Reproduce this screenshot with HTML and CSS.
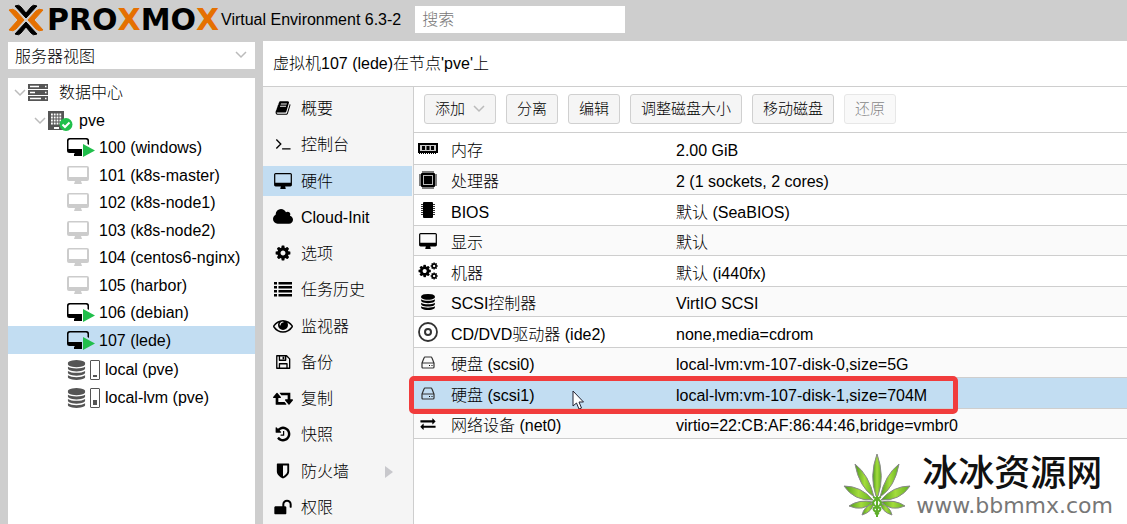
FILE: index.html
```html
<!DOCTYPE html>
<html lang="zh-CN">
<head>
  <meta charset="utf-8">
  <title>pve - Proxmox Virtual Environment</title>
  <link rel="stylesheet" href="styles.css">
</head>
<body>
  <!--icons-->
  <svg class="sprite" aria-hidden="true">
    <symbol id="desktop" viewBox="0 0 1856 1664"><path d="M1728 992v-832q0-13-9.500-22.500t-22.500-9.500h-1536q-13 0-22.500 9.500t-9.500 22.500v832q0 13 9.500 22.500t22.500 9.500h1536q13 0 22.500-9.500t9.500-22.500zm128-832v1088q0 66-47 113t-113 47h-544q0 37 16 77.500t32 71 16 43.500q0 26-19 45t-45 19h-448q-26 0-45-19t-19-45q0-14 16-44t32-70 16-78h-544q-66 0-113-47t-47-113v-1088q0-66 47-113t113-47h1536q66 0 113 47t47 113z"/></symbol>
    <symbol id="book" viewBox="0 0 1792 1792"><path d="M1703 478q40 57 18 129l-275 906q-19 64-76.500 107.500t-122.500 43.500h-923q-77 0-148.500-53.500t-99.500-131.500q-24-67-2-127 0-4 3-27t4-37q1-8-3-21.500t-3-19.500q2-11 8-21t16.500-23.500 16.500-23.500q23-38 45-91.500t30-91.500q3-10 .5-30t-.5-28q3-11 17-28t17-23q21-36 42-92t25-90q1-9-2.500-32t.5-28q4-13 22-30.500t22-22.500q19-26 42.500-84.500t27.500-96.500q1-8-3-25.500t-2-26.500q2-8 9-18t18-23 17-21q8-12 16.500-30.500t15-35 16-36 19.500-32 26.500-23.500 36-11.500 47.500 5.500l-1 3q38-9 51-9h761q74 0 114 56t18 130l-274 906q-36 119-71.500 153.500t-128.500 34.500h-869q-27 0-38 15-11 16-1 43 24 70 144 70h923q29 0 56-15.500t35-41.500l300-987q7-22 5-57 38 15 59 43zm-1064 2q-4 13 2 22.500t20 9.500h608q13 0 25.500-9.500t16.500-22.500l21-64q4-13-2-22.500t-20-9.500h-608q-13 0-25.500 9.500t-16.500 22.500zm-83 256q-4 13 2 22.500t20 9.500h608q13 0 25.500-9.500t16.500-22.500l21-64q4-13-2-22.500t-20-9.500h-608q-13 0-25.500 9.500t-16.500 22.500z"/></symbol>
    <symbol id="terminal" viewBox="0 0 18 18"><path d="M1.500 4l5 5-5 5M8 14.500h9.500" fill="none" stroke="currentColor" stroke-width="1.500"/></symbol>
    <symbol id="cloud" viewBox="64 192 1920 1408"><path d="M1984 1152q0 159-112.500 271.500t-271.500 112.500h-1088q-185 0-316.500-131.500t-131.500-316.500q0-132 71-241.500t187-163.500q-2-28-2-43 0-212 150-362t362-150q158 0 286.500 88t187.500 230q70-62 166-62 106 0 181 75t75 181q0 75-41 138 129 30 213 134.500t84 239.500z"/></symbol>
    <symbol id="cog" viewBox="64 64 1664 1664"><path d="M1152 896q0-106-75-181t-181-75-181 75-75 181 75 181 181 75 181-75 75-181zm512-109v222q0 12-8 23t-20 13l-185 28q-19 54-39 91 35 50 107 138 10 12 10 25t-9 23q-27 37-99 108t-94 71q-12 0-26-9l-138-108q-44 23-91 38-16 136-29 186-7 28-36 28h-222q-14 0-24.500-8.500t-11.500-21.500l-28-184q-49-16-90-37l-141 107q-10 9-25 9-14 0-25-11-126-114-165-168-7-10-7-23 0-12 8-23 15-21 51-66.500t54-70.500q-27-50-41-99l-183-27q-13-2-21-12.500t-8-23.500v-222q0-12 8-23t19-13l186-28q14-46 39-92-40-57-107-138-10-12-10-24 0-10 9-23 26-36 98.500-107.500t94.500-71.500q13 0 26 10l138 107q44-23 91-38 16-136 29-186 7-28 36-28h222q14 0 24.500 8.500t11.500 21.500l28 184q49 16 90 37l142-107q9-9 24-9 13 0 25 10 129 119 165 170 7 8 7 22 0 12-8 23-15 21-51 66.500t-54 70.500q26 50 41 98l183 28q13 2 21 12.500t8 23.500z"/></symbol>
    <symbol id="cogs" viewBox="0 0 18 18"><use href="#cog" x="0" y="3" width="12" height="12"/><use href="#cog" x="11" y="1" width="7" height="7"/><use href="#cog" x="11" y="10" width="7" height="7"/></symbol>
    <symbol id="list" viewBox="0 0 18 16"><path d="M0 1h3v2.500H0zM4.500 1H18v2.500H4.500zM0 5h3v2.500H0zM4.500 5H18v2.500H4.500zM0 9h3v2.500H0zM4.500 9H18v2.500H4.500zM0 13h3v2.500H0zM4.500 13H18v2.500H4.500z"/></symbol>
    <symbol id="eye" viewBox="0 256 1792 1344"><path d="M1664 960q-152-236-381-353 61 104 61 225 0 185-131.500 316.500t-316.500 131.500-316.500-131.500-131.500-316.500q0-121 61-225-229 117-381 353 133 205 333.500 326.500t434.500 121.500 434.500-121.500 333.500-326.500zm-720-384q0-20-14-34t-34-14q-125 0-214.500 89.500t-89.500 214.500q0 20 14 34t34 14 34-14 14-34q0-86 61-147t147-61q20 0 34-14t14-34zm848 384q0 34-20 69-140 230-376.500 368.500t-499.500 138.500-499.500-139-376.500-368q-20-35-20-69t20-69q140-229 376.500-368t499.500-139 499.500 139 376.500 368q20 35 20 69z"/></symbol>
    <symbol id="save" viewBox="0 0 18 18"><path d="M2 2h11l3.500 3.500V16H2zM5 2v5h7V2M5 16v-5h8.500v5" fill="none" stroke="currentColor" stroke-width="1.500" stroke-linejoin="round"/><path d="M8.500 3h2v3h-2z"/></symbol>
    <symbol id="retweet" viewBox="0 128 1920 1536"><path d="M1280 1504q0 13-9.500 22.500t-22.500 9.500h-960q-8 0-13.500-2t-9-7-5.500-8-3-11.500-1-11.500v-600h-192q-26 0-45-19t-19-45q0-24 15-41l320-384q19-22 49-22t49 22l320 384q15 17 15 41 0 26-19 45t-45 19h-192v384h576q16 0 25 11l160 192q7 10 7 21zm640-416q0 24-15 41l-320 384q-20 23-49 23t-49-23l-320-384q-15-17-15-41 0-26 19-45t45-19h192v-384h-576q-16 0-25-12l-160-192q-7-9-7-20 0-13 9.500-22.500t22.500-9.500h960q8 0 13.500 2t9 7 5.500 8 3 11.500 1 11.500v600h192q26 0 45 19t19 45z"/></symbol>
    <symbol id="history" viewBox="64 64 1664 1664"><path d="M1664 896q0 156-61 298t-164 245-245 164-298 61q-172 0-327-72.500t-264-204.500q-7-10-6.500-22.500t8.500-20.500l137-138q10-9 25-9 16 2 23 12 73 95 179 147t225 52q104 0 198.500-40.500t163.500-109.500 109.500-163.500 40.500-198.500-40.500-198.500-109.500-163.500-163.500-109.500-198.500-40.500q-98 0-188 35.500t-160 101.500l137 138q31 30 14 69-17 40-59 40h-448q-26 0-45-19t-19-45v-448q0-42 40-59 39-17 69 14l130 129q107-101 244.500-156.500t284.500-55.500q156 0 298 61t245 164 164 245 61 298zm-640-288v448q0 14-9 23t-23 9h-320q-14 0-23-9t-9-23v-64q0-14 9-23t23-9h224v-352q0-14 9-23t23-9h64q14 0 23 9t9 23z"/></symbol>
    <symbol id="shield" viewBox="64 64 1664 1664"><path d="M1344 960v-640h-448v1137q119-63 213-137 235-184 235-360zm192-768v768q0 86-33.500 170.500t-83 150-118 127.500-126.500 103-121 77.500-89.500 49.500-42.500 20q-12 6-26 6t-26-6q-16-7-42.500-20t-89.500-49.500-121-77.500-126.500-103-118-127.500-83-150-33.500-170.500v-768q0-26 19-45t45-19h1152q26 0 45 19t19 45z"/></symbol>
    <symbol id="unlock" viewBox="0 64 1792 1536"><path d="M1728 576v256q0 26-19 45t-45 19h-64q-26 0-45-19t-19-45v-256q0-106-75-181t-181-75-181 75-75 181v192h96q40 0 68 28t28 68v576q0 40-28 68t-68 28h-960q-40 0-68-28t-28-68v-576q0-40 28-68t68-28h672v-192q0-185 131.500-316.500t316.500-131.500 316.500 131.500 131.500 316.500z"/></symbol>
    <symbol id="database" viewBox="128 0 1536 1792"><path d="M896 768q237 0 443-43t325-127v170q0 69-103 128t-280 93.500-385 34.500-385-34.500-280-93.500-103-128v-170q119 84 325 127t443 43zm0 768q237 0 443-43t325-127v170q0 69-103 128t-280 93.500-385 34.500-385-34.500-280-93.500-103-128v-170q119 84 325 127t443 43zm0-384q237 0 443-43t325-127v170q0 69-103 128t-280 93.500-385 34.500-385-34.500-280-93.500-103-128v-170q119 84 325 127t443 43zm0-1152q208 0 385 34.500t280 93.500 103 128v128q0 69-103 128t-280 93.500-385 34.500-385-34.500-280-93.500-103-128v-128q0-69 103-128t280-93.500 385-34.500z"/></symbol>
    <symbol id="exchange" viewBox="0 128 1792 1536"><path d="M1792 1184v192q0 13-9.500 22.500t-22.500 9.500h-1376v192q0 13-9.500 22.500t-22.500 9.500q-12 0-24-10l-319-320q-9-9-9-22 0-14 9-23l320-320q9-9 23-9 13 0 22.500 9.500t9.500 22.500v192h1376q13 0 22.500 9.500t9.500 22.500zm0-544q0 14-9 23l-320 320q-9 9-23 9-13 0-22.500-9.500t-9.500-22.500v-192h-1376q-13 0-22.500-9.500t-9.500-22.500v-192q0-13 9.500-22.500t22.500-9.500h1376v-192q0-14 9-23t23-9q12 0 24 10l319 319q9 9 9 23z"/></symbol>
    <symbol id="server" viewBox="0 0 20 17"><path d="M0 0h20v5H0zM0 6h20v5H0zM0 12h20v5H0z"/><path d="M2 2.500h9M2 8.500h5M2 14.500h11M17 2.500h1.500M17 8.500h1.500M17 14.500h1.500" stroke="#fff" stroke-width="1.500"/></symbol>
    <symbol id="node" viewBox="0 0 25 20"><path d="M0 0h16v19H0z"/><path d="M3 3.500h11M3 6.500h11M3 9.500h11M3 12.500h11" stroke="#fff" stroke-width="1.800" stroke-dasharray="1.800 1"/><path d="M6 16h5v2H6z" fill="#fff"/><circle cx="18" cy="13.500" r="6.500" fill="#21bf4b"/><path d="M14.500 13.500l2.500 2.500 4.500-4.500" fill="none" stroke="#fff" stroke-width="2"/></symbol>
    <symbol id="running" viewBox="0 0 28 20"><path d="M2.500 0h17Q22 0 22 2.500V7l-1.500-1V3q0-1.500-1.500-1.500H3Q1.500 1.500 1.500 3v8H15v7H7v-2l1-1H2.500Q0 15 0 12.500v-10Q0 0 2.500 0z"/><path d="M16 6l12 6.500L16 19z" fill="#21bf4b"/></symbol>
    <symbol id="stopped" viewBox="0 0 28 20"><path fill-rule="evenodd" d="M2 0h18q2 0 2 2v11q0 2-2 2h-6l1 3H7l1-3H2q-2 0-2-2V2q0-2 2-2zm0 1.500V11h18V1.500z"/></symbol>
    <symbol id="memory" viewBox="0 0 20 12"><path d="M1 1h18v8H1z" fill="#ccc" stroke="currentColor" stroke-width="2"/><path d="M4 3h3v4H4zM8.500 3h3v4h-3zM13 3h3v4h-3z"/><path d="M1 10.500h18" stroke="currentColor" stroke-width="1" stroke-dasharray="1 1"/></symbol>
    <symbol id="cpu" viewBox="0 0 20 20"><path d="M5 1v18M7 1v18M9 1v18M11 1v18M13 1v18M15 1v18M1 5h18M1 7h18M1 9h18M1 11h18M1 13h18M1 15h18" stroke="currentColor"/><rect x="3" y="3" width="14" height="14" rx="1"/><path d="M5 5h10v10H5z" fill="#bbb"/><path d="M6 6h8v8H6z"/></symbol>
    <symbol id="chip" viewBox="0 0 16 16"><rect x="3" y="0" width="10" height="16" rx="1"/><path d="M1 2.500h14M1 4.500h14M1 6.500h14M1 8.500h14M1 10.500h14M1 12.500h14" stroke="currentColor" stroke-width=".8"/></symbol>
    <symbol id="disc" viewBox="0 0 20 20"><circle cx="10" cy="10" r="9" fill="none" stroke="#333" stroke-width="1.800"/><circle cx="10" cy="10" r="3" fill="none" stroke="#333" stroke-width="2"/></symbol>
    <symbol id="hdd" viewBox="0 0 14 13"><path d="M1 7l2-5q.3-1 1-1h6q.7 0 1 1l2 5v4q0 1-1 1H2q-1 0-1-1zh12" fill="none" stroke="#333" stroke-width="1.200"/><path d="M8 9h1v1H8zM10.500 9h1v1h-1z"/></symbol>
    <symbol id="chevron" viewBox="0 0 12 8"><path d="M1 1l5 5 5-5" fill="none" stroke="currentColor" stroke-width="1.500"/></symbol>
  </svg>

  <header class="topbar">
    <svg class="mark" viewBox="0 0 36 32">
      <g stroke-width="1" stroke-linejoin="round">
        <path d="M1 6q4-2 7 1l8 9-8 9q-3 3-7 1l9-10z" fill="#e57000" stroke="#e57000"/>
        <path d="M35 6q-4-2-7 1l-8 9 8 9q3 3 7 1l-9-10z" fill="#e57000" stroke="#e57000"/>
        <path d="M7 2q4-2 6 1l5 6 5-6q2-3 6-1L18 14zM7 30q4 2 6-1l5-6 5 6q2 3 6 1L18 18z" stroke="#000"/>
      </g>
    </svg>
    <span class="brand">PRO<b>X</b>MO<b>X</b></span>
    <span class="version">Virtual Environment 6.3-2</span>
    <input type="search" class="search" placeholder="搜索" aria-label="搜索">
  </header>

  <div class="workspace">
    <!--tree-->
    <aside class="sidebar">
      <div class="viewSelect">
        <select aria-label="视图"><option>服务器视图</option></select>
        <svg class="chevron"><use href="#chevron"/></svg>
      </div>
      <ul class="tree">
        <li class="root"><svg class="chevron"><use href="#chevron"/></svg><span class="treeIcon"><svg class="server"><use href="#server"/></svg></span>数据中心</li>
        <li class="node"><svg class="chevron"><use href="#chevron"/></svg><span class="treeIcon"><svg class="host"><use href="#node"/></svg></span>pve</li>
        <li class="vm"><span class="treeIcon"><svg class="guest"><use href="#running"/></svg></span>100 (windows)</li>
        <li class="vm off"><span class="treeIcon"><svg class="guest"><use href="#stopped"/></svg></span>101 (k8s-master)</li>
        <li class="vm off"><span class="treeIcon"><svg class="guest"><use href="#stopped"/></svg></span>102 (k8s-node1)</li>
        <li class="vm off"><span class="treeIcon"><svg class="guest"><use href="#stopped"/></svg></span>103 (k8s-node2)</li>
        <li class="vm off"><span class="treeIcon"><svg class="guest"><use href="#stopped"/></svg></span>104 (centos6-nginx)</li>
        <li class="vm off"><span class="treeIcon"><svg class="guest"><use href="#stopped"/></svg></span>105 (harbor)</li>
        <li class="vm"><span class="treeIcon"><svg class="guest"><use href="#running"/></svg></span>106 (debian)</li>
        <li class="vm selected"><span class="treeIcon"><svg class="guest"><use href="#running"/></svg></span>107 (lede)</li>
        <li class="storage"><svg class="db"><use href="#database"/></svg><span class="usage low"></span>local (pve)</li>
        <li class="storage"><svg class="db"><use href="#database"/></svg><span class="usage half"></span>local-lvm (pve)</li>
      </ul>
    </aside>

    <main class="panel">
      <h1 class="panelTitle">虚拟机107 (lede)在节点'pve'上</h1>
      <div class="panelBody">
        <nav class="menu">
          <a href="#"><svg><use href="#book"/></svg>概要</a>
          <a href="#"><svg><use href="#terminal"/></svg>控制台</a>
          <a href="#" class="selected"><svg><use href="#desktop"/></svg>硬件</a>
          <a href="#"><svg><use href="#cloud"/></svg>Cloud-Init</a>
          <a href="#"><svg><use href="#cog"/></svg>选项</a>
          <a href="#"><svg><use href="#list"/></svg>任务历史</a>
          <a href="#"><svg><use href="#eye"/></svg>监视器</a>
          <a href="#"><svg><use href="#save"/></svg>备份</a>
          <a href="#"><svg><use href="#retweet"/></svg>复制</a>
          <a href="#"><svg><use href="#history"/></svg>快照</a>
          <a href="#" class="more"><svg><use href="#shield"/></svg>防火墙</a>
          <a href="#"><svg><use href="#unlock"/></svg>权限</a>
        </nav>

        <section class="hardware">
          <div class="toolbar">
            <button type="button">添加<svg class="chevron"><use href="#chevron"/></svg></button>
            <button type="button">分离</button>
            <button type="button">编辑</button>
            <button type="button">调整磁盘大小</button>
            <button type="button">移动磁盘</button>
            <button type="button" disabled>还原</button>
          </div>
          <table>
            <tbody>
              <tr><td class="icon"><svg class="large"><use href="#memory"/></svg></td><td class="name">内存</td><td>2.00 GiB</td></tr>
              <tr><td class="icon"><svg class="large"><use href="#cpu"/></svg></td><td class="name">处理器</td><td>2 (1 sockets, 2 cores)</td></tr>
              <tr><td class="icon"><svg><use href="#chip"/></svg></td><td class="name">BIOS</td><td>默认 (SeaBIOS)</td></tr>
              <tr><td class="icon"><svg><use href="#desktop"/></svg></td><td class="name">显示</td><td>默认</td></tr>
              <tr><td class="icon"><svg class="large"><use href="#cogs"/></svg></td><td class="name">机器</td><td>默认 (i440fx)</td></tr>
              <tr><td class="icon"><svg><use href="#database"/></svg></td><td class="name">SCSI控制器</td><td>VirtIO SCSI</td></tr>
              <tr><td class="icon"><svg class="large"><use href="#disc"/></svg></td><td class="name">CD/DVD驱动器 (ide2)</td><td>none,media=cdrom</td></tr>
              <tr><td class="icon"><svg class="small"><use href="#hdd"/></svg></td><td class="name">硬盘 (scsi0)</td><td>local-lvm:vm-107-disk-0,size=5G</td></tr>
              <tr class="selected">
                <td class="icon"><svg class="small"><use href="#hdd"/></svg><span class="highlight"></span></td>
                <td class="name">硬盘 (scsi1)<svg class="pointer" viewBox="0 0 12 20"><path d="M1 1v15l3.500-3 2.500 6 2.500-1L7 12h4.500z" fill="#fff" stroke="#223"/></svg></td>
                <td>local-lvm:vm-107-disk-1,size=704M</td>
              </tr>
              <tr><td class="icon"><svg class="small"><use href="#exchange"/></svg></td><td class="name">网络设备 (net0)</td><td>virtio=22:CB:AF:86:44:46,bridge=vmbr0</td></tr>
            </tbody>
          </table>
        </section>
      </div>
    </main>
  </div>

  <!--watermark-->
  <div class="watermark">
    <svg viewBox="0 0 68 66">
      <defs>
        <linearGradient id="leaf"><stop offset="0" stop-color="#4c9a1c"/><stop offset=".5" stop-color="#a4dc3c"/><stop offset="1" stop-color="#62b022"/></linearGradient>
      </defs>
      <g fill="url(#leaf)" stroke="#888" stroke-width="1">
        <path d="M34 1q8 22 1 42h-2q-7-20 1-42z"/>
        <path d="M12 11q14 11 19 33Q16 34 12 11z"/>
        <path d="M56 11q-14 11-19 33 15-10 19-33z"/>
        <path d="M1 33q17 0 29 14Q11 48 1 33z"/>
        <path d="M67 33q-17 0-29 14 19 1 29-14z"/>
        <path d="M6 53q10-7 24-4-10 10-24 4z"/>
        <path d="M62 53q-10-7-24-4 10 10 24 4z"/>
        <path d="M19 62q2-9 12-12-2 9-12 12z"/>
        <path d="M49 62q-2-9-12-12 2 9 12 12z"/>
      </g>
      <path d="M34 43v21M30 44q8 3 8 6t-7 5q-2 2 5 6M38 44q-8 3-8 6t7 5q2 2-5 6" fill="none" stroke="#5fae2a" stroke-width="2"/>
    </svg>
    <div>
      <div class="siteName">冰冰资源网</div>
      <div class="siteUrl">www.bbmmx.com</div>
    </div>
  </div>
</body>
</html>
```
FILE: styles.css
```css
* {
  box-sizing: border-box;
}
html, body {
  height: 100%;
  margin: 0;
  overflow: hidden;
}
body {
  display: flex;
  flex-direction: column;
  background-color: #cecece;
  color: #000;
  font-family: "Liberation Sans", "Noto Sans CJK SC", sans-serif;
  font-size: 16px;
  font-weight: 300;
  line-height: 20px;
}
svg {
  fill: currentColor;
  flex: none;
}
button, input, select {
  font: inherit;
  color: inherit;
}
ul {
  list-style-type: none;
  margin: 0;
  padding: 0;
}
.sprite {
  position: absolute;
  width: 0;
  height: 0;
}
.chevron {
  width: 12px;
  height: 8px;
  color: #bbb;
}
.selected {
  background-color: #c2ddf2;
}

/* top bar */
.topbar {
  display: flex;
  align-items: center;
  height: 41px;
  padding: 0 8px 2px;
}
.mark {
  width: 36px;
  height: 32px;
  margin-right: 3px;
}
.brand {
  width: 174px;
  font-family: "DejaVu Sans", sans-serif;
  font-size: 30px;
  font-weight: bold;
}
.brand b {
  color: #e57000;
}
.version {
  white-space: nowrap;
}
.search {
  width: 210px;
  height: 27px;
  margin-left: 14px;
  padding: 0 7px;
  border: none;
  background-color: #fff;
  appearance: none;
}
.search::placeholder {
  color: #777;
}

.workspace {
  display: flex;
  flex: 1;
  min-height: 0;
}

/* resource tree */
.sidebar {
  display: flex;
  flex-direction: column;
  flex: none;
  width: 247px;
  margin: 1px 8px 0;
}
.viewSelect {
  display: flex;
  position: relative;
  height: 27px;
  margin-bottom: 9px;
}
.viewSelect select {
  flex: 1;
  padding: 2px 7px 0;
  border: none;
  border-radius: 0;
  background-color: #fff;
  appearance: none;
}
.viewSelect .chevron {
  position: absolute;
  top: 9px;
  right: 8px;
}
.tree {
  flex: 1;
  background-color: #fff;
}
.tree li {
  display: flex;
  align-items: center;
  height: 28px;
  padding-top: 1px;
  white-space: nowrap;
}
.tree .vm:nth-child(odd) {
  height: 27px;
}
.tree .chevron {
  margin-right: 2px;
}
.tree .root {
  padding-left: 6px;
}
.tree .node {
  padding-left: 26px;
}
.tree .vm, .tree .storage {
  padding-left: 59px;
}
.tree .storage {
  padding-top: 3px;
}
.treeIcon {
  display: flex;
  width: 32px;
  color: #555;
}
.root .treeIcon, .node .treeIcon {
  width: 31px;
}
.vm .treeIcon {
  color: #000;
}
.off .treeIcon {
  color: #ccc;
}
.server {
  width: 20px;
  height: 17px;
}
.host {
  width: 25px;
  height: 20px;
}
.guest {
  width: 28px;
  height: 20px;
}
.db {
  width: 19px;
  height: 20px;
  color: #555;
}
.usage {
  display: flex;
  align-items: flex-end;
  width: 10px;
  height: 20px;
  margin: 0 5px 0 4px;
  padding: 2px;
  border: 1px solid #555;
  border-radius: 1px;
}
.usage::after {
  content: "";
  flex: 1;
  height: 2px;
  background-color: #555;
}
.usage.half::after {
  height: 5px;
}

/* main panel */
.panel {
  display: flex;
  flex-direction: column;
  flex: 1;
  min-width: 0;
  background-color: #fff;
}
.panelTitle {
  margin: 0;
  padding: 13px 10px 12px;
  border-bottom: 1px solid #cecece;
  font-size: 16px;
  font-weight: 300;
}
.panelBody {
  display: flex;
  flex: 1;
  min-height: 0;
}
.menu {
  flex: none;
  width: 151px;
  padding-top: 6px;
  border-right: 1px solid #cecece;
  background-color: #f5f5f5;
}
.menu a {
  display: flex;
  align-items: center;
  height: 30px;
  margin: 0 1px 6px 0;
  padding: 2px 0 0 10px;
  color: #000;
  text-decoration: none;
}
.menu a:nth-child(4n + 3) {
  margin-top: 7px;
}
.menu svg {
  width: 20px;
  height: 16px;
  margin: 0 8px 2px 0;
}
.menu .more::after {
  content: "";
  margin-left: auto;
  margin-right: 19px;
  border: 6px solid transparent;
  border-left: 8px solid #c8c8cc;
  border-right: none;
}

/* hardware */
.hardware {
  flex: 1;
  min-width: 0;
}
.toolbar {
  display: flex;
  gap: 10px;
  padding: 7px 10px 8px;
  border-bottom: 1px solid #cecece;
}
.toolbar button {
  display: flex;
  align-items: center;
  height: 30px;
  padding: 0 10px;
  border: 1px solid #d0d0d0;
  border-radius: 3px;
  background-color: #f5f5f5;
  font-size: 15px;
}
.toolbar button:disabled {
  opacity: 0.5;
}
.toolbar .chevron {
  margin-left: 8px;
}
table {
  width: 100%;
  border-collapse: separate;
  border-spacing: 0;
  table-layout: fixed;
}
tr:nth-child(even) {
  background-color: #fafafa;
}
td {
  height: 31px;
  padding: 5px 0 0;
  border-bottom: 1px solid #cecece;
  white-space: nowrap;
}
tr:nth-child(even) td {
  height: 30px;
}
tr:first-child td {
  height: 32px;
}
.icon {
  position: relative;
  width: 37px;
  padding: 0 0 0 4px;
}
.icon svg {
  display: block;
  width: 20px;
  height: 16px;
}
.icon .large {
  height: 20px;
}
.icon .small {
  height: 13px;
}
.name {
  position: relative;
  width: 225px;
}
.highlight {
  position: absolute;
  z-index: 1;
  top: -2px;
  left: -5px;
  width: 549px;
  height: 38px;
  border: 5px solid #f13c3c;
  border-radius: 5px;
}
.pointer {
  position: absolute;
  top: 12px;
  left: 121px;
  width: 12px;
  height: 20px;
}

.watermark {
  position: absolute;
  right: 14px;
  bottom: 5px;
  display: flex;
  align-items: center;
  gap: 5px;
}
.watermark svg {
  width: 68px;
  height: 66px;
}
.siteName {
  padding-left: 6px;
  color: #111;
  font-size: 36px;
  font-weight: 500;
  line-height: 40px;
}
.siteUrl {
  color: #777;
  font-family: "DejaVu Sans", sans-serif;
  font-size: 22px;
  font-weight: 400;
  line-height: 24px;
}
```
